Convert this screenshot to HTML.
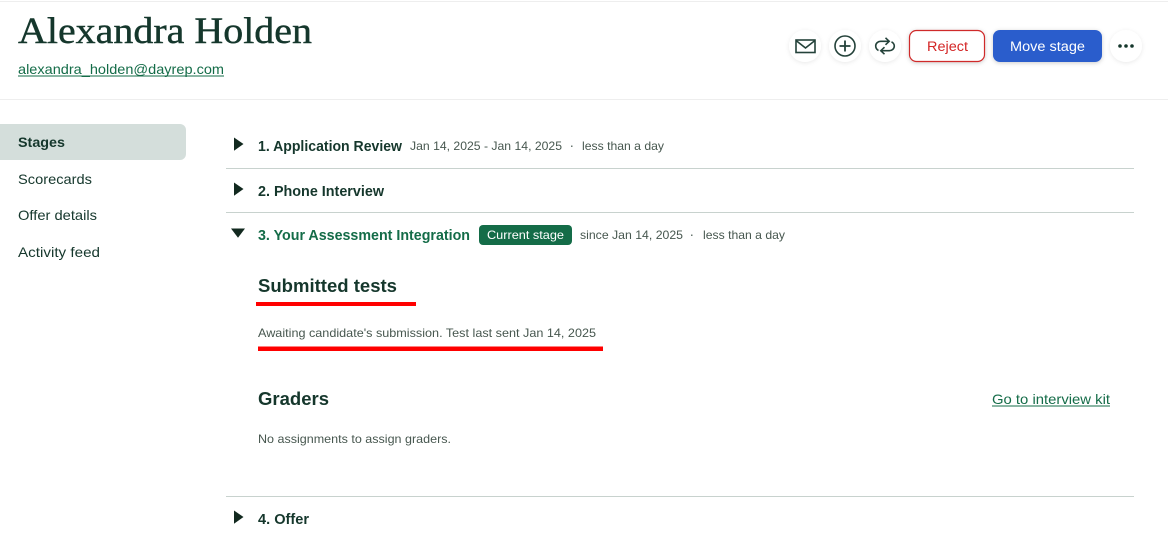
<!DOCTYPE html>
<html><head><meta charset="utf-8"><style>
html,body{margin:0;padding:0;background:#fff;width:1168px;height:554px;overflow:hidden}
svg{display:block}
text{font-family:"Liberation Sans",sans-serif;white-space:pre}
.b{font-weight:700}
.d{fill:#15372c}
.g{fill:#47574f;font-size:12px}
</style></head><body>
<svg width="1168" height="554" viewBox="0 0 1168 554" xmlns="http://www.w3.org/2000/svg">
<defs>
<filter id="s" x="-30%" y="-30%" width="160%" height="170%"><feDropShadow dx="0" dy="1" stdDeviation="2" flood-color="#000" flood-opacity=".09"/></filter>
<filter id="t" x="-30%" y="-30%" width="160%" height="170%"><feDropShadow dx="0" dy="1" stdDeviation="2" flood-color="#000" flood-opacity=".2"/></filter>
</defs>
<rect x="0" y="1" width="1168" height="1" fill="#eeeeee"/>
<rect x="0" y="99" width="1168" height="1" fill="#eeeeee"/>
<text x="18" y="43" font-size="37" style="font-family:'Liberation Serif',serif" class="d" stroke="#15372c" stroke-width=".4" textLength="294" lengthAdjust="spacingAndGlyphs">Alexandra Holden</text>
<text x="18" y="74" font-size="14" fill="#146c48" textLength="206" lengthAdjust="spacingAndGlyphs">alexandra_holden@dayrep.com</text>
<rect x="18" y="75.5" width="206" height="1" fill="#146c48"/>

<circle cx="805" cy="46" r="16" fill="#fff" filter="url(#s)"/>
<circle cx="845" cy="46" r="16" fill="#fff" filter="url(#s)"/>
<circle cx="885" cy="46" r="16" fill="#fff" filter="url(#s)"/>
<circle cx="1126" cy="46" r="16" fill="#fff" filter="url(#s)"/>
<g fill="none" stroke="#24423a" stroke-width="1.6">
<rect x="796" y="40" width="19" height="12.5"/>
<path d="M796 40.500l9.500 7.500 9.500-7.500"/>
<circle cx="845" cy="46" r="10"/>
<path d="M845 40.500v11M839.500 46h11" stroke-width="1.8"/>
<path d="M878.500 50.500c-1.800-1-2.800-2.700-2.800-4.500 0-2.800 2.300-4.700 5-4.700h8"/>
<path d="M891.500 41.800c1.800 1 2.800 2.500 2.800 4.200 0 2.800-2.300 4.700-5 4.700h-8"/>
<path d="M885.500 37.800l3.700 3.500-3.700 3.500M884.500 47.200l-3.700 3.500 3.700 3.500"/>
</g>
<rect x="909.500" y="30.500" width="75" height="31" rx="7" fill="#fff" stroke="#cf2a2a" stroke-width="1.2" filter="url(#t)"/>
<text x="927" y="51" font-size="13.500" fill="#d32525" textLength="41" lengthAdjust="spacingAndGlyphs">Reject</text>
<rect x="993" y="30" width="109" height="32" rx="7" fill="#2a5dcc" filter="url(#t)"/>
<text x="1010" y="51" font-size="13.500" fill="#fff" textLength="75" lengthAdjust="spacingAndGlyphs">Move stage</text>
<circle cx="1120" cy="46" r="1.800" fill="#15372c"/><circle cx="1126" cy="46" r="1.800" fill="#15372c"/><circle cx="1132" cy="46" r="1.800" fill="#15372c"/>

<path d="M0 124h180a6 6 0 0 1 6 6v24a6 6 0 0 1-6 6H0z" fill="#d4dedb"/>
<text x="18" y="147" font-size="14" class="b d" textLength="47" lengthAdjust="spacingAndGlyphs">Stages</text>
<text x="18" y="184" font-size="14" class="d" textLength="74" lengthAdjust="spacingAndGlyphs">Scorecards</text>
<text x="18" y="220" font-size="14" class="d" textLength="79" lengthAdjust="spacingAndGlyphs">Offer details</text>
<text x="18" y="257" font-size="14" class="d" textLength="82" lengthAdjust="spacingAndGlyphs">Activity feed</text>

<g fill="#12291f">
<path d="M234 137.500l9.500 6.500-9.500 6.800z"/>
<path d="M234 182.500l9.500 6.500-9.500 6.800z"/>
<path d="M231 228.500h14l-7 9.200z"/>
<path d="M234 510.500l9.500 6.500-9.500 6.800z"/>
</g>
<rect x="226" y="168" width="908" height="1" fill="#c8d2ce"/>
<rect x="226" y="212" width="908" height="1" fill="#c8d2ce"/>
<rect x="226" y="496" width="908" height="1" fill="#c8d2ce"/>

<text x="258" y="151" font-size="14.500" class="b d" textLength="144" lengthAdjust="spacingAndGlyphs">1. Application Review</text>
<text x="410" y="150" class="g" textLength="152" lengthAdjust="spacingAndGlyphs">Jan 14, 2025 - Jan 14, 2025</text>
<rect x="571" y="145.500" width="1.500" height="1.500" fill="#6a7872"/>
<text x="582" y="150" class="g" textLength="82" lengthAdjust="spacingAndGlyphs">less than a day</text>
<text x="258" y="196" font-size="14.500" class="b d" textLength="126" lengthAdjust="spacingAndGlyphs">2. Phone Interview</text>
<text x="258" y="240" font-size="14.500" class="b" fill="#146c48" textLength="212" lengthAdjust="spacingAndGlyphs">3. Your Assessment Integration</text>
<rect x="479" y="225" width="93" height="20" rx="4" fill="#146c48"/>
<text x="487" y="239" font-size="12" fill="#fff" textLength="77" lengthAdjust="spacingAndGlyphs">Current stage</text>
<text x="580" y="239" class="g" textLength="103" lengthAdjust="spacingAndGlyphs">since Jan 14, 2025</text>
<rect x="691" y="234.500" width="1.500" height="1.500" fill="#6a7872"/>
<text x="703" y="239" class="g" textLength="82" lengthAdjust="spacingAndGlyphs">less than a day</text>

<text x="258" y="292" font-size="18" class="b d" textLength="139" lengthAdjust="spacingAndGlyphs">Submitted tests</text>
<rect x="256" y="302" width="160" height="4" fill="#ff0000"/>
<text x="258" y="337" class="g" textLength="338" lengthAdjust="spacingAndGlyphs">Awaiting candidate's submission. Test last sent Jan 14, 2025</text>
<rect x="258" y="346.500" width="345" height="4.500" fill="#ff0000"/>
<text x="258" y="405" font-size="18" class="b d" textLength="71" lengthAdjust="spacingAndGlyphs">Graders</text>
<text x="992" y="404" font-size="14" fill="#146c48" textLength="118" lengthAdjust="spacingAndGlyphs">Go to interview kit</text>
<rect x="992" y="405.500" width="118" height="1" fill="#146c48"/>
<text x="258" y="443" class="g" textLength="193" lengthAdjust="spacingAndGlyphs">No assignments to assign graders.</text>
<text x="258" y="524" font-size="14.500" class="b d" textLength="51" lengthAdjust="spacingAndGlyphs">4. Offer</text>
</svg>
</body></html>
